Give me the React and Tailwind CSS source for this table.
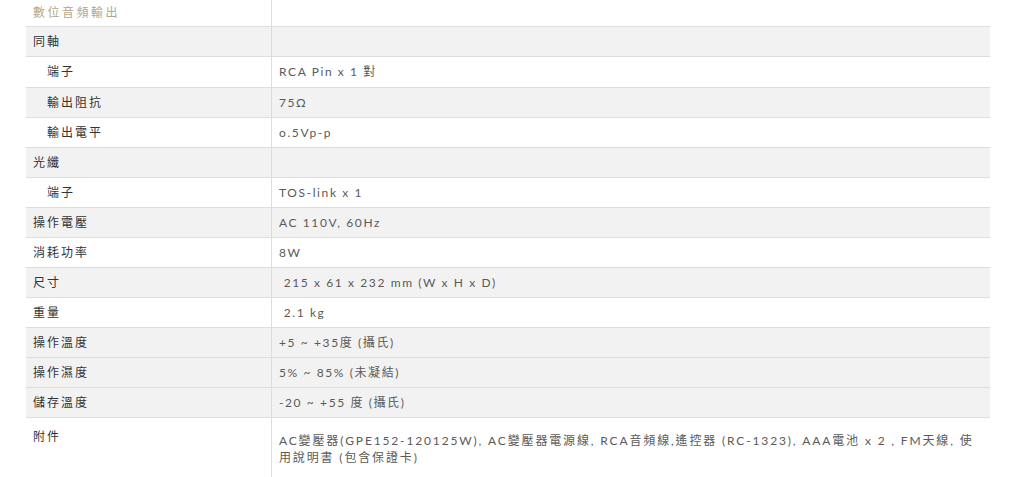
import React from 'react';

const rows = [
  {label: '同軸', value: '', gray: true},
  {label: '端子', value: 'RCA Pin x 1 對', sub: true, tall: true},
  {label: '輸出阻抗', value: '75Ω', sub: true, gray: true},
  {label: '輸出電平', value: 'o.5Vp-p', sub: true},
  {label: '光纖', value: '', gray: true},
  {label: '端子', value: 'TOS-link x 1', sub: true},
  {label: '操作電壓', value: 'AC 110V, 60Hz', gray: true},
  {label: '消耗功率', value: '8W'},
  {label: '尺寸', value: '\u00a0215 x 61 x 232 mm (W x H x D)', gray: true},
  {label: '重量', value: '\u00a02.1 kg'},
  {label: '操作溫度', value: '+5 ~ +35度 (攝氏)', gray: true},
  {label: '操作濕度', value: '5% ~ 85% (未凝結)', gray: true},
  {label: '儲存溫度', value: '-20 ~ +55 度 (攝氏)', gray: true},
];

const Row = ({label, value, sub, gray, tall}) => (
  <div className={`flex border-b border-[#dddddd] ${tall ? 'h-[31px]' : 'h-[30px]'} ${gray ? 'bg-[#f2f2f2]' : 'bg-white'}`}>
    <div className={`w-[246px] shrink-0 border-r border-[#dddddd] flex items-center text-[12px] tracking-[2px] text-[#333333] ${sub ? 'pl-[21px]' : 'pl-[7px]'}`}>
      {label}
    </div>
    <div className="flex-1 flex items-center pl-[7px] text-[12px] tracking-[1.6px] text-[#5a5a5a]">
      {value}
    </div>
  </div>
);

export default function App() {
  return (
    <div className="w-[1017px] h-[477px] bg-white overflow-hidden"
         style={{fontFamily: 'Lato, "Noto Sans CJK TC", sans-serif'}}>
      <div className="ml-[26px] w-[964px]">
        <div className="flex h-[27px] border-b border-[#dddddd]">
          <div className="w-[246px] shrink-0 border-r border-[#dddddd] flex items-center pl-[7px] text-[12px] tracking-[2.5px] text-[#b3a68c]">
            數位音頻輸出
          </div>
          <div className="flex-1"/>
        </div>

        {rows.map((r, i) => <Row key={i} {...r}/>)}

        <div className="flex h-[60px] bg-white">
          <div className="w-[246px] shrink-0 border-r border-[#dddddd] pl-[7px] pt-[10px] text-[12px] tracking-[2px] text-[#333333]">
            附件
          </div>
          <div className="flex-1 pl-[7px] pt-[14px] text-[12px] leading-[17px] tracking-[1.85px] text-[#5a5a5a] whitespace-nowrap">
            AC變壓器(GPE152-120125W), AC變壓器電源線, RCA音頻線,遙控器 (RC-1323), AAA電池 x 2 , FM天線, 使<br/>
            用說明書 (包含保證卡)
          </div>
        </div>
      </div>
    </div>
  );
}
